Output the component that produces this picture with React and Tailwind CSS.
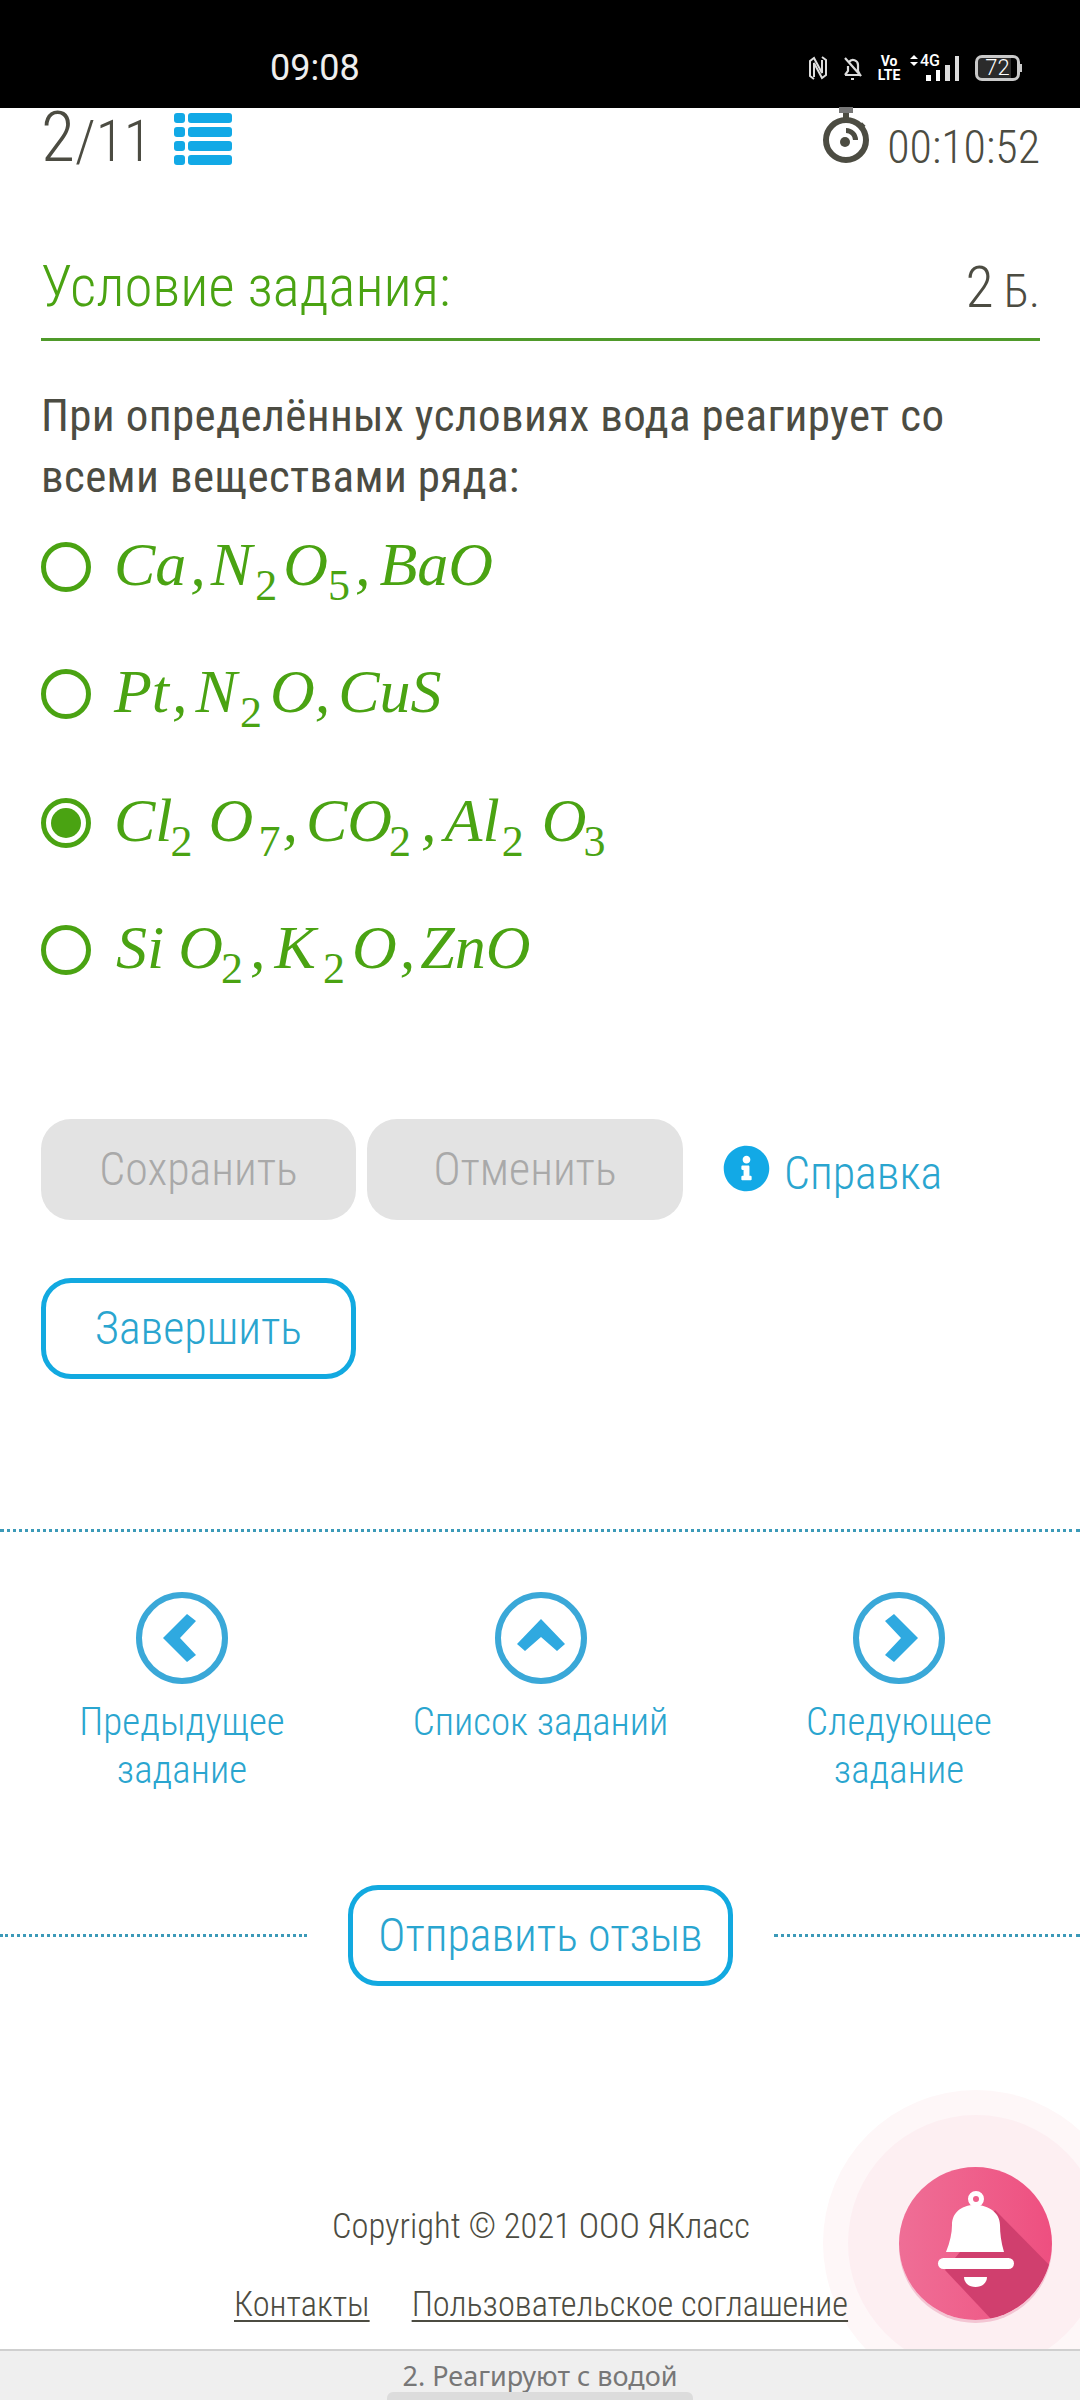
import { FaInfoCircle } from "react-icons/fa";

const GREEN = "text-[#4aa312]";

function Sub({ children, ml = "" }) {
  return (
    <span className={`inline-block w-[21px] text-center not-italic text-[44px] leading-none align-[-15px] ${ml}`}>
      {children}
    </span>
  );
}

function Radio({ checked = false }) {
  return (
    <span className="flex h-[50px] w-[50px] shrink-0 items-center justify-center rounded-full border-[5px] border-[#4aa312] bg-white">
      {checked && <span className="h-[30px] w-[30px] rounded-full bg-[#4aa312]" />}
    </span>
  );
}

function Option({ checked, className = "", children }) {
  return (
    <div className={`flex h-[50px] items-center gap-[23px] ${className}`}>
      <Radio checked={checked} />
      <div className={`mt-[12px] font-['Liberation_Serif',serif] text-[62px] italic leading-[50px] whitespace-nowrap ${GREEN}`}>
        {children}
      </div>
    </div>
  );
}

function NavItem({ points, label }) {
  return (
    <div className="flex w-[300px] flex-col items-center">
      <svg width="92" height="92" viewBox="0 0 92 92">
        <circle cx="46" cy="46" r="43" fill="none" stroke="#3aa8d8" strokeWidth="6" />
        <polygon points={points} fill="#2fa9e0" />
      </svg>
      <div className="mt-[14px] text-center text-[39px] font-light leading-[48px] text-[#2aa5cf]">
        {label}
      </div>
    </div>
  );
}

function StatusIcons() {
  return (
    <div className="ml-auto flex h-[30px] items-center pr-[58px]">
      <svg width="20" height="26" viewBox="0 0 20 26" fill="none" stroke="#ddd" strokeWidth="2">
        <path d="M6 24 2 21V6l4-3 8 15V5" />
        <path d="M14 2l4 3v15l-4 3-8-15v14" />
      </svg>
      <svg className="ml-[14px]" width="22" height="26" viewBox="0 0 22 26" fill="none" stroke="#ddd" strokeWidth="2.2">
        <path d="M3 20h15l-2-4v-6a5 5 0 0 0-9-3M6 11v5l-3 4M3 3l16 18M9 24h3" />
      </svg>
      <div className="ml-[15px] flex w-[20px] flex-col items-center text-[14px] font-bold leading-[14px] text-white">
        <span>Vo</span>
        <span>LTE</span>
      </div>
      <div className="relative ml-[11px] h-[28px] w-[49px]">
        <svg className="absolute left-0 top-[1px]" width="8" height="11" viewBox="0 0 8 11" fill="#fff">
          <path d="M4 0 8 4H0ZM4 11 0 7h8Z" />
        </svg>
        <span className="absolute left-[10px] top-[-2px] text-[16px] font-medium leading-[18px] text-white">
          4G
        </span>
        <div className="absolute bottom-[1px] right-0 flex items-end gap-[5px]">
          <span className="h-[6px] w-[5px] bg-white" />
          <span className="h-[11px] w-[4px] bg-white" />
          <span className="h-[16px] w-[5px] bg-[#ddd]" />
          <span className="h-[25px] w-[4px] bg-[#ddd]" />
        </div>
      </div>
      <div className="ml-[16px] flex h-[26px] w-[45px] items-center justify-center rounded-[7px] border-[3px] border-[#c9c9c9] bg-[linear-gradient(90deg,#2b2b2b_85%,transparent_85%)] text-[22px] font-light leading-none text-white">
        72
      </div>
      <span className="h-[8px] w-[2px] bg-[#c9c9c9]" />
    </div>
  );
}

function Stopwatch() {
  return (
    <svg width="48" height="58" viewBox="0 0 48 58" className="shrink-0">
      <rect x="17" y="0" width="14" height="6" fill="#777" />
      <rect x="21" y="6" width="6" height="6" fill="#4c4c42" />
      <rect x="38" y="16" width="5" height="5" fill="#4c4c42" transform="rotate(45 40 18)" />
      <circle cx="24" cy="33" r="20" fill="none" stroke="#4c4c42" strokeWidth="6" />
      <circle cx="23" cy="35" r="5" fill="#4c4c42" />
      <path d="M24 21a12 12 0 0 1 12 12h-5a7 7 0 0 0-7-7Z" fill="#4c4c42" />
    </svg>
  );
}

function Bell() {
  return (
    <svg width="153" height="153" viewBox="0 0 153 153" className="absolute inset-0">
      <defs>
        <clipPath id="bellClip">
          <circle cx="76.5" cy="76.5" r="76.5" />
        </clipPath>
      </defs>
      <polygon points="96,43 168,116 168,170 109,170 46,103" fill="#d03f6e" clipPath="url(#bellClip)" />
      <circle cx="77" cy="32" r="5.5" fill="none" stroke="#fff" strokeWidth="5" />
      <path d="M47 85C51 75 53 66 53 58 53 46 62 38 76 38s25 8 25 20c0 8 1 17 4 27Z" fill="#fff" />
      <rect x="39" y="91" width="76" height="11" rx="5.5" fill="#fff" />
      <path d="M65 110h23c0 6-5 10-11.500 10S65 116 65 110Z" fill="#fff" />
    </svg>
  );
}

export default function App() {
  return (
    <div className="relative h-[2400px] w-[1080px] overflow-hidden bg-white font-['Roboto',sans-serif] [font-stretch:75%]">
      <div className="flex h-[108px] items-center bg-black pt-[28px] [font-stretch:100%]">
        <span className="ml-[270px] text-[36px] leading-none text-[#eee]">09:08</span>
        <StatusIcons />
      </div>

      <div className="flex h-[57px] items-end justify-between pl-[41px] pr-[40px]">
        <div className="flex items-end">
          <div className="mb-[-6px] font-light leading-none text-[#4c4c42]">
            <span className="text-[70px] leading-[60px]">2</span>
            <span className="text-[58px] leading-[60px]">/11</span>
          </div>
          <div className="ml-[22px] flex flex-col gap-[4px]">
            {[0, 1, 2, 3].map((i) => (
              <div key={i} className="flex gap-[3px]">
                <span className="h-[10px] w-[11px] rounded-[3px] bg-[#12a9e6]" />
                <span className="h-[10px] w-[44px] rounded-[3px] bg-[#12a9e6]" />
              </div>
            ))}
          </div>
        </div>
        <div className="flex items-end gap-[17px]">
          <Stopwatch />
          <span className="mb-[-5px] text-[46px] font-light leading-[46px] text-[#4c4c42]">00:10:52</span>
        </div>
      </div>

      <div className="ml-[41px] mr-[40px] mt-[82px] flex h-[94px] items-start justify-between border-b-[3px] border-[#4f9a2a]">
        <span className={`text-[57px] font-light leading-[80px] ${GREEN}`}>Условие задания:</span>
        <span className="font-light leading-[80px] text-[#4c4c42]">
          <span className="text-[58px]">2</span>
          <span className="ml-[10px] text-[46px]">Б.</span>
        </span>
      </div>

      <div className="mt-[44px] px-[41px] text-[45px] leading-[61px] tracking-[0.35px] text-[#4c4c42]">
        При определённых условиях вода реагирует со
        <br />
        всеми веществами ряда:
      </div>

      <div className="mt-[35px] flex flex-col gap-[77px] px-[41px]">
        <Option>
          Ca<span className="ml-[4px]">,</span>
          <span className="ml-[5px]">N</span>
          <Sub ml="ml-[3px]">2</Sub>
          <span className="ml-[7px]">O</span>
          <Sub>5</Sub>
          <span className="ml-[6px]">,</span>
          <span className="ml-[9px]">BaO</span>
        </Option>
        <Option>
          Pt<span className="ml-[3px]">,</span>
          <span className="ml-[8px]">N</span>
          <Sub ml="ml-[3px]">2</Sub>
          <span className="ml-[9px]">O</span>,
          <span className="ml-[8px]">CuS</span>
        </Option>
        <Option checked className="mt-[2px]">
          Cl
          <Sub ml="ml-[-2px]">2</Sub>
          <span className="ml-[17px]">O</span>
          <Sub ml="ml-[5px]">7</Sub>
          <span className="ml-[3px]">,</span>
          <span className="ml-[8px]">CO</span>
          <Sub ml="ml-[-3px]">2</Sub>
          <span className="ml-[11px]">,</span>
          <span className="ml-[8px]">Al</span>
          <Sub ml="ml-[2px]">2</Sub>
          <span className="ml-[19px]">O</span>
          <Sub ml="ml-[-3px]">3</Sub>
        </Option>
        <Option>
          <span className="ml-[2px]">Si</span>
          <span className="ml-[14px]">O</span>
          <Sub ml="ml-[-2px]">2</Sub>
          <span className="ml-[8px]">,</span>
          <span className="ml-[9px]">K</span>
          <Sub ml="ml-[7px]">2</Sub>
          <span className="ml-[8px]">O</span>
          <span className="ml-[3px]">,</span>
          <span className="ml-[5px]">ZnO</span>
        </Option>
      </div>

      <div className="mt-[144px] flex items-center px-[41px]">
        <div className="flex h-[101px] w-[315px] items-center justify-center rounded-[30px] bg-[#e3e3e3] text-[46px] font-light text-[#a9a9a9]">
          Сохранить
        </div>
        <div className="ml-[11px] flex h-[101px] w-[316px] items-center justify-center rounded-[30px] bg-[#e3e3e3] text-[46px] font-light text-[#a9a9a9]">
          Отменить
        </div>
        <FaInfoCircle className="ml-[40px] mt-[-2px] text-[47px] text-[#12a9e6]" />
        <span className="ml-[14px] mt-[8px] text-[46px] font-light text-[#2aa5cf]">Справка</span>
      </div>

      <div className="ml-[41px] mt-[58px] flex h-[101px] w-[315px] items-center justify-center rounded-[30px] border-[5px] border-[#12a9e0] text-[46px] font-light text-[#2aa5cf]">
        Завершить
      </div>

      <div className="mt-[150px] border-t-[3px] border-dotted border-[#3c9ab8]" />

      <div className="mt-[60px] flex justify-between pl-[32px] pr-[31px]">
        <NavItem
          points="27,46 51,22 60,29 44,46 60,63 51,70"
          label={
            <>
              Предыдущее
              <br />
              задание
            </>
          }
        />
        <NavItem points="46,27 70,52 62,59 46,45 30,59 22,52" label="Список заданий" />
        <NavItem
          points="65,46 41,22 32,29 48,46 32,63 41,70"
          label={
            <>
              Следующее
              <br />
              задание
            </>
          }
        />
      </div>

      <div className="mt-[91px] flex items-center">
        <div className="w-[307px] border-t-[3px] border-dotted border-[#3c9ab8]" />
        <div className="ml-[41px] flex h-[101px] w-[385px] items-center justify-center rounded-[30px] border-[5px] border-[#12a9e0] text-[46px] font-light text-[#2aa5cf]">
          Отправить отзыв
        </div>
        <div className="ml-[41px] flex-1 border-t-[3px] border-dotted border-[#3c9ab8]" />
      </div>

      <div className="mt-[217px] pl-[2px] text-center text-[34.5px] font-light leading-[46px] text-[#4c4c42]">
        Copyright © 2021 ООО ЯКласс
      </div>
      <div className="relative z-10 mt-[32px] flex h-[46px] gap-[42px] pl-[234px] text-[34.4px] font-light leading-[46px] text-[#4c4c42]">
        <span className="underline decoration-2 underline-offset-4">Контакты</span>
        <span className="underline decoration-2 underline-offset-4">Пользовательское соглашение</span>
      </div>

      <div className="absolute left-[823px] top-[2090px] h-[306px] w-[306px] rounded-full bg-[#fef7f8]" />
      <div className="absolute left-[848px] top-[2115px] h-[256px] w-[256px] rounded-full bg-[#fdeff2]" />
      <div className="absolute left-[899px] top-[2167px] h-[153px] w-[153px] overflow-hidden rounded-full bg-gradient-to-r from-[#ef6e96] to-[#ee4f80] shadow-[0_3px_0_#f3c5d3]">
        <Bell />
      </div>

      <div className="absolute bottom-0 left-0 right-0 flex h-[51px] flex-col items-center border-t-2 border-[#cfcfcf] bg-[#efefef] [font-stretch:100%]">
        <span className="mt-[6px] font-['Noto_Sans',sans-serif] text-[27px] leading-[38px] text-[#777]">
          2. Реагируют с водой
        </span>
        <span className="absolute bottom-0 h-[8px] w-[306px] rounded-t-[6px] bg-[#dcdcdc]" />
      </div>
    </div>
  );
}
